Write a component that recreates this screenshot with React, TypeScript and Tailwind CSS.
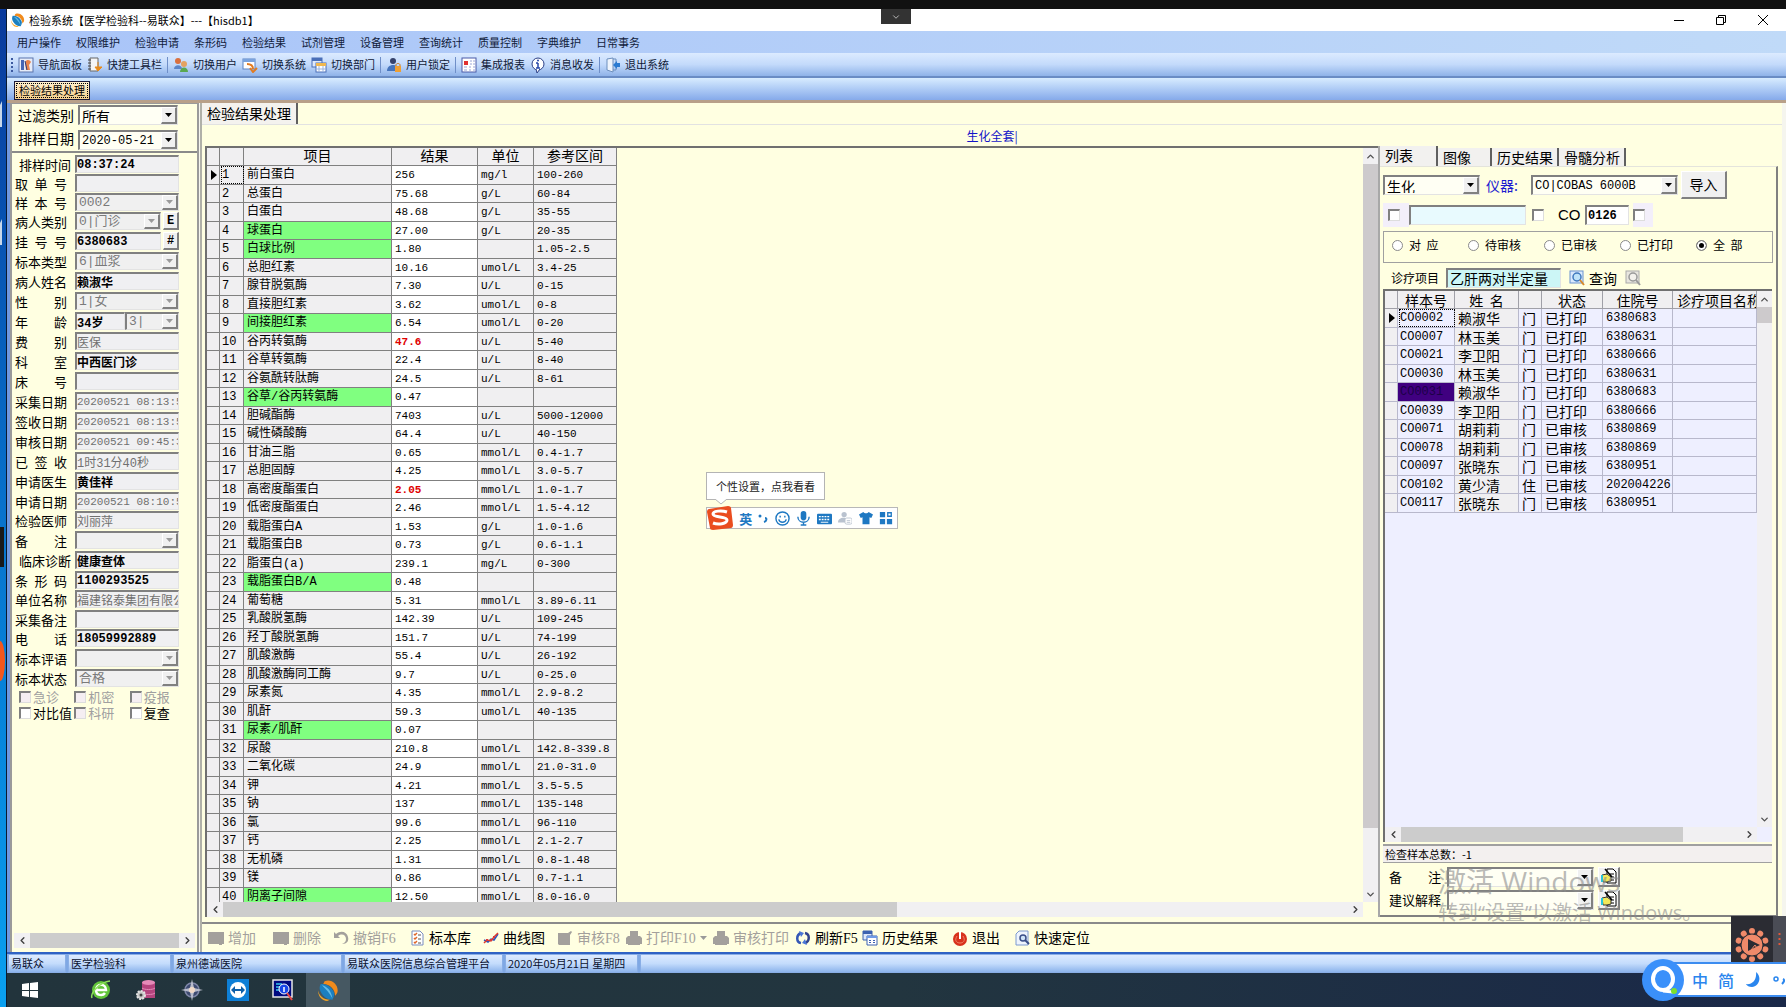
import React from 'react';
import { ChevronDown, ChevronLeft, ChevronRight, ChevronUp } from 'lucide-react';
import clsx from 'clsx';

type Kind = 'text' | 'combo';

interface FieldRow {
  label: string;
  value: string;
  kind?: Kind;
  bold?: boolean;
  tight?: boolean;
  small?: boolean;
  indent?: boolean;
  extra?: string;
}

const MENUS = ['用户操作', '权限维护', '检验申请', '条形码', '检验结果', '试剂管理', '设备管理', '查询统计', '质量控制', '字典维护', '日常事务'];

const FIELDS: FieldRow[] = [
  { label: '排样时间', value: '08:37:24', bold: true, tight: true, indent: true },
  { label: '取 单 号', value: '', tight: true },
  { label: '样 本 号', value: '0002', kind: 'combo', tight: true },
  { label: '病人类别', value: '0|门诊', kind: 'combo', extra: 'E' },
  { label: '挂 号 号', value: '6380683', bold: true, extra: '#' },
  { label: '标本类型', value: '6|血浆', kind: 'combo' },
  { label: '病人姓名', value: '赖淑华', bold: true },
  { label: '性 别', value: '1|女', kind: 'combo' },
  { label: '年 龄', value: '34岁', bold: true, extra: 'age' },
  { label: '费 别', value: '医保' },
  { label: '科 室', value: '中西医门诊', bold: true },
  { label: '床 号', value: '' },
  { label: '采集日期', value: '20200521 08:13:54', small: true },
  { label: '签收日期', value: '20200521 08:13:54', small: true },
  { label: '审核日期', value: '20200521 09:45:34', small: true },
  { label: '已 签 收', value: '1时31分40秒' },
  { label: '申请医生', value: '黄佳祥', bold: true },
  { label: '申请日期', value: '20200521 08:10:54', small: true, tight: true },
  { label: '检验医师', value: '刘丽萍' },
  { label: '备 注', value: '', kind: 'combo' },
  { label: '临床诊断', value: '健康查体', bold: true, indent: true },
  { label: '条 形 码', value: '1100293525', bold: true, tight: true },
  { label: '单位名称', value: '福建铭泰集团有限公司' },
  { label: '采集备注', value: '', tight: true },
  { label: '电 话', value: '18059992889', bold: true },
  { label: '标本评语', value: '', kind: 'combo' },
  { label: '标本状态', value: '合格', kind: 'combo' },
];

// name, result, unit, range
const RESULTS: [string, string, string, string][] = [
  ['前白蛋白', '256', 'mg/l', '100-260'],
  ['总蛋白', '75.68', 'g/L', '60-84'],
  ['白蛋白', '48.68', 'g/L', '35-55'],
  ['球蛋白', '27.00', 'g/L', '20-35'],
  ['白球比例', '1.80', '', '1.05-2.5'],
  ['总胆红素', '10.16', 'umol/L', '3.4-25'],
  ['腺苷脱氨酶', '7.30', 'U/L', '0-15'],
  ['直接胆红素', '3.62', 'umol/L', '0-8'],
  ['间接胆红素', '6.54', 'umol/L', '0-20'],
  ['谷丙转氨酶', '47.6', 'u/L', '5-40'],
  ['谷草转氨酶', '22.4', 'u/L', '8-40'],
  ['谷氨酰转肽酶', '24.5', 'u/L', '8-61'],
  ['谷草/谷丙转氨酶', '0.47', '', ''],
  ['胆碱酯酶', '7403', 'u/L', '5000-12000'],
  ['碱性磷酸酶', '64.4', 'u/L', '40-150'],
  ['甘油三脂', '0.65', 'mmol/L', '0.4-1.7'],
  ['总胆固醇', '4.25', 'mmol/L', '3.0-5.7'],
  ['高密度酯蛋白', '2.05', 'mmol/L', '1.0-1.7'],
  ['低密度酯蛋白', '2.46', 'mmol/L', '1.5-4.12'],
  ['载脂蛋白A', '1.53', 'g/L', '1.0-1.6'],
  ['载脂蛋白B', '0.73', 'g/L', '0.6-1.1'],
  ['脂蛋白(a)', '239.1', 'mg/L', '0-300'],
  ['载脂蛋白B/A', '0.48', '', ''],
  ['葡萄糖', '5.31', 'mmol/L', '3.89-6.11'],
  ['乳酸脱氢酶', '142.39', 'U/L', '109-245'],
  ['羟丁酸脱氢酶', '151.7', 'U/L', '74-199'],
  ['肌酸激酶', '55.4', 'U/L', '26-192'],
  ['肌酸激酶同工酶', '9.7', 'U/L', '0-25.0'],
  ['尿素氮', '4.35', 'mmol/L', '2.9-8.2'],
  ['肌酐', '59.3', 'umol/L', '40-135'],
  ['尿素/肌酐', '0.07', '', ''],
  ['尿酸', '210.8', 'umol/L', '142.8-339.8'],
  ['二氧化碳', '24.9', 'mmol/L', '21.0-31.0'],
  ['钾', '4.21', 'mmol/L', '3.5-5.5'],
  ['钠', '137', 'mmol/L', '135-148'],
  ['氯', '99.6', 'mmol/L', '96-110'],
  ['钙', '2.25', 'mmol/L', '2.1-2.7'],
  ['无机磷', '1.31', 'mmol/L', '0.8-1.48'],
  ['镁', '0.86', 'mmol/L', '0.7-1.1'],
  ['阴离子间隙', '12.50', 'mmol/L', '8.0-16.0'],
];

// calculated items are shown green, abnormal values red
const CALCULATED = [4, 5, 9, 13, 23, 31, 40];
const ABNORMAL = [10, 18];

const SAMPLES: [string, string, string, string, string][] = [
  ['CO0002', '赖淑华', '门', '已打印', '6380683'],
  ['CO0007', '林玉美', '门', '已打印', '6380631'],
  ['CO0021', '李卫阳', '门', '已打印', '6380666'],
  ['CO0030', '林玉美', '门', '已打印', '6380631'],
  ['CO0031', '赖淑华', '门', '已打印', '6380683'],
  ['CO0039', '李卫阳', '门', '已打印', '6380666'],
  ['CO0071', '胡莉莉', '门', '已审核', '6380869'],
  ['CO0078', '胡莉莉', '门', '已审核', '6380869'],
  ['CO0097', '张晓东', '门', '已审核', '6380951'],
  ['CO0102', '黄少清', '住', '已审核', '202004226'],
  ['CO0117', '张晓东', '门', '已审核', '6380951'],
];

const sunken = 'border-t-2 border-l-2 border-t-[#808080] border-l-[#808080] border-r border-b border-r-[#e3e3e3] border-b-[#e3e3e3]';
const raised = 'border-t border-l border-t-white border-l-white border-r-2 border-b-2 border-r-[#808080] border-b-[#808080] bg-[#f0f0f0]';
const mono = "font-['Liberation_Mono','Noto_Sans_CJK_SC',monospace]";

/* ---------- icons ---------- */

const Svg = ({ children, size = 16, box = 16 }: { children: React.ReactNode; size?: number; box?: number }) => (
  <svg width={size} height={size} viewBox={`0 0 ${box} ${box}`} fill="none" className="shrink-0" aria-hidden="true">
    {children}
  </svg>
);

const AppLogo = ({ size = 16 }: { size?: number }) => (
  <Svg size={size}>
    <path d="M5 1C10-1 15 3 15 8c0 2-1 3-2 4C13 7 9 3 4 3z" fill="#f08a1c" />
    <path d="M2 3c5 0 8 2 10 6 1 2 0 4-1 6-4 0-7-2-9-6-1-2-1-4 0-6z" fill="#1b7fc0" />
    <path d="M3 4c4 1 7 4 8 10-2-4-5-7-8-10z" fill="#63bbe6" />
    <path d="M0 8c1 4 4 7 9 7l-2 1C3 16 0 12 0 8z" fill="#f6a623" />
  </Svg>
);

const NavIcon = () => (
  <Svg>
    <rect x="1" y="1" width="14" height="14" fill="#e6ecf8" stroke="#5b74ad" />
    <path d="M3 3h3v10H3z" fill="#4566b5" />
    <path d="M7 5c2-3 5-2 6 0l-2 3 1 5H8z" fill="#e8834b" />
    <path d="M7 4l2 9" stroke="#2c3f80" />
  </Svg>
);
const ToolsIcon = () => (
  <Svg>
    <path d="M3 1h8v13H3z" fill="#f5f5f5" stroke="#666" />
    <path d="M1 3h3M1 6h3M1 9h3M1 12h3" stroke="#444" />
    <path d="M11 5v7M8 10l3 4 4-4z" fill="#e88b1a" stroke="#e88b1a" />
  </Svg>
);
const SwitchUserIcon = () => (
  <Svg>
    <circle cx="5" cy="4" r="3" fill="#d9703f" />
    <path d="M1 12c0-5 8-5 8 0z" fill="#5c86c9" />
    <circle cx="11" cy="7" r="3" fill="#e3a262" />
    <path d="M7 15c0-6 8-6 8 0z" fill="#5aa850" />
  </Svg>
);
const SwitchSysIcon = () => (
  <Svg>
    <rect x="1" y="2" width="12" height="10" fill="#fff" stroke="#5a83c4" />
    <path d="M1 2h12v3H1z" fill="#7ba3dd" />
    <path d="M5 7c4 0 6 2 6 5M8 11l3 4 4-4" stroke="#e07b22" strokeWidth="2" />
  </Svg>
);
const SwitchDeptIcon = () => (
  <Svg>
    <rect x="1" y="1" width="10" height="9" fill="#dfe9fa" stroke="#4a6fb8" />
    <path d="M1 1h10v3H1z" fill="#4a6fb8" />
    <rect x="5" y="6" width="10" height="9" fill="#fff" stroke="#4a6fb8" />
    <path d="M5 6h10v3H5z" fill="#f0b850" />
    <path d="M8 9v6M12 9v6M5 12h10" stroke="#9ab3dd" />
  </Svg>
);
const LockUserIcon = () => (
  <Svg>
    <circle cx="7" cy="4" r="3" fill="#35426b" />
    <path d="M1 14c0-8 12-8 12 0z" fill="#4675bd" />
    <rect x="9" y="9" width="6" height="6" fill="#f0a032" />
    <path d="M10 9V8c0-2 4-2 4 0v1" stroke="#c2761a" />
  </Svg>
);
const ReportIcon = () => (
  <Svg>
    <rect x="1" y="1" width="14" height="14" fill="#fff" stroke="#4a5ba8" />
    <path d="M3 4h4v4H3z" fill="#e03131" />
    <path d="M9 4h2M12 4h2M9 7h2M12 7h2M3 10h3M8 10h2M12 10h2M3 13h3M8 13h2M12 13h2" stroke="#9aa6d8" />
  </Svg>
);
const InfoIcon = () => (
  <Svg>
    <circle cx="8" cy="7" r="6" fill="#fff" stroke="#2b3f86" />
    <path d="M6 12l1 4 3-4" fill="#fff" stroke="#2b3f86" />
    <path d="M8 6v5M6 11h4M6 6h2" stroke="#2747a8" strokeWidth="1.5" />
    <circle cx="8" cy="3.5" r="1" fill="#2747a8" />
  </Svg>
);
const LeaveIcon = () => (
  <Svg>
    <path d="M2 2l6-1v14l-6-2z" fill="#eef4fc" stroke="#6d8fbd" />
    <path d="M8 2h3v11H8" stroke="#6d8fbd" />
    <path d="M8 8l4-4v2h3v4h-3v2z" fill="#2b7bd1" />
  </Svg>
);

const GrayBlock = ({ shape = 'box' }: { shape?: 'box' | 'check' | 'print' }) => (
  <Svg>
    {shape === 'box' && <path d="M0 2h16v12h-2v1h-3v-1H0z" fill="#a3a09c" />}
    {shape === 'check' && <path d="M1 3h10l3-2 1 1-2 3v10H2l-1-1z" fill="#a3a09c" />}
    {shape === 'print' && <path d="M4 1h8v5h2l2 2v6h-2v1H2v-1H0V8l2-2h2z" fill="#a3a09c" />}
  </Svg>
);
const UndoIcon = () => (
  <Svg>
    <path d="M1 2v6h6L5 6c4-3 8-1 8 3 0 2-1 4-4 5 5 0 7-3 6-7C14 2 8 0 3 4z" fill="#a3a09c" />
  </Svg>
);
const ListIcon = () => (
  <Svg>
    <path d="M3 1h8l3 3v11H3z" fill="#fff" stroke="#7a8dc0" />
    <path d="M5 4l1 1 2-2M5 8l1 1 2-2M5 12l1 1 2-2" stroke="#e0662a" strokeWidth="1.5" />
    <path d="M9 5h3M9 9h3M9 13h3" stroke="#555" />
  </Svg>
);
const CurveIcon = () => (
  <Svg>
    <path d="M1 10l4 2 3-3 3 1 4-6" stroke="#2855c0" strokeWidth="1.5" />
    <path d="M1 13l3-3 4 1 3-4 4-4" stroke="#e03a2a" strokeWidth="1.5" />
    <path d="M3 9h2v2H3zM7 9h2v2H7zM10 6h2v2h-2z" fill="#d93a3a" />
  </Svg>
);
const RefreshIcon = () => (
  <Svg>
    <path d="M6 13C1 12 1 5 6 3" stroke="#3557b5" strokeWidth="2.5" />
    <path d="M10 3c5 1 5 8 0 10" stroke="#31438c" strokeWidth="2.5" />
    <path d="M4 1l5 2-3 4zM12 15l-5-2 3-4z" fill="#4a76d6" />
  </Svg>
);
const HistoryIcon = () => (
  <Svg>
    <path d="M1 1h9v9H1z" fill="#dce8fb" stroke="#3c62b0" />
    <path d="M1 1h9v3H1z" fill="#3c62b0" />
    <path d="M5 6h10v9H5z" fill="#fff" stroke="#3c62b0" />
    <path d="M5 6h10v2H5z" fill="#6f9be6" />
    <path d="M7 10h2v1H7zM11 10h2v1h-2zM7 12h2v1H7zM11 12h2v1h-2z" fill="#3c62b0" />
  </Svg>
);
const PowerIcon = () => (
  <Svg>
    <circle cx="8" cy="9" r="7" fill="#d8321c" />
    <path d="M5 6c-3 5 0 7 3 7s6-2 3-7" stroke="#f08468" />
    <path d="M8 1v8" stroke="#fff" strokeWidth="2" />
  </Svg>
);
const SearchIcon = ({ gray }: { gray?: boolean }) => (
  <Svg>
    <rect x="1" y="1" width="13" height="12" fill={gray ? '#e8e6df' : '#dbeafc'} stroke={gray ? '#aaa' : '#6a92cf'} />
    <circle cx="8" cy="7" r="4" fill={gray ? '#f3f1ec' : '#bfe3f9'} stroke={gray ? '#999' : '#3f78bd'} strokeWidth="1.5" />
    <path d="M11 10l4 5" stroke={gray ? '#999' : '#d88a2a'} strokeWidth="2" />
  </Svg>
);
const LocateIcon = () => (
  <Svg>
    <path d="M5 1h9v14H2V4z" fill="#eef4fd" stroke="#7d9ad0" />
    <circle cx="9" cy="8" r="3" fill="#cfe4f8" stroke="#3a4f88" strokeWidth="1.5" />
    <path d="M11 10l4 4" stroke="#3a4f88" strokeWidth="2" />
  </Svg>
);
const NoteIcon = () => (
  <Svg>
    <path d="M6 1h6l3 3v11H6z" fill="#fff" stroke="#000" />
    <path d="M9 6h4M9 9h4M9 12h4" stroke="#000" />
    <path d="M1 7l5-1 4 3v4l-4 1H2z" fill="#f2e85a" stroke="#333" />
    <path d="M4 1l7 8" stroke="#000" strokeWidth="1.5" />
    <path d="M0 7h2v7H0z" fill="#27c4d8" />
  </Svg>
);

/* ---------- basic controls ---------- */

const Triangle = ({ muted }: { muted?: boolean }) => (
  <svg width="7" height="4" viewBox="0 0 7 4" aria-hidden="true">
    <path d="M0 0h7L3.5 4z" fill={muted ? '#9a9a9a' : '#000'} />
  </svg>
);

interface ComboProps {
  id: string;
  value: string;
  disabled?: boolean;
  className?: string;
  label?: string;
}

const Combo = ({ id, value, disabled, className, label }: ComboProps) => (
  <div className={clsx('flex min-w-0', sunken, disabled ? 'bg-[#f0f0f0]' : 'bg-[#fffff4]', className)}>
    <select
      id={id}
      aria-label={label}
      disabled={disabled}
      className={clsx('min-w-0 flex-1 appearance-none bg-transparent pl-0.5 leading-none opacity-100 outline-none', disabled && 'text-[#7a7a7a]')}>
      <option>{value}</option>
    </select>
    <span className={clsx('flex w-4 shrink-0 items-center justify-center', raised)}>
      <Triangle muted={disabled} />
    </span>
  </div>
);

const Check = ({ id, disabled, label }: { id: string; disabled?: boolean; label?: string }) => (
  <input
    id={id}
    type="checkbox"
    aria-label={label}
    disabled={disabled}
    className={clsx('size-3 shrink-0 appearance-none border-t-2 border-l-2 border-r border-b border-t-[#808080] border-l-[#808080] border-r-[#ddd] border-b-[#ddd]',
      disabled ? 'bg-[#f5eef2]' : 'bg-white')}
  />
);

const VScroll = ({ thumb }: { thumb: string }) => (
  <div className="flex w-[15px] shrink-0 flex-col bg-[#f1f0f2]">
    <span className="flex h-4 shrink-0 items-center justify-center"><ChevronUp size={11} strokeWidth={3} color="#505050" /></span>
    <div className="min-h-0 flex-1"><div className={clsx('w-full bg-[#cdcacc]', thumb)} /></div>
    <span className="flex h-4 shrink-0 items-center justify-center"><ChevronDown size={11} strokeWidth={3} color="#505050" /></span>
  </div>
);

const HScroll = ({ thumb }: { thumb: string }) => (
  <div className="flex h-[15px] shrink-0 bg-[#f1f0f2]">
    <span className="flex w-4 shrink-0 items-center justify-center"><ChevronLeft size={11} strokeWidth={3} color="#404040" /></span>
    <div className="min-w-0 flex-1"><div className={clsx('h-full bg-[#cccccc]', thumb)} /></div>
    <span className="flex w-4 shrink-0 items-center justify-center"><ChevronRight size={11} strokeWidth={3} color="#404040" /></span>
  </div>
);

const RowMarker = () => (
  <svg width="6" height="10" viewBox="0 0 6 10" className="ml-1" aria-hidden="true">
    <path d="M0 0l6 5-6 5z" fill="#000" />
  </svg>
);

/* ---------- window parts ---------- */

const TitleBar = () => (
  <header className="flex h-[22px] shrink-0 items-center bg-white pr-0.5 pl-1 text-[11px] text-black">
    <AppLogo size={14} />
    <h1 className="ml-1 flex-1 whitespace-nowrap">检验系统【医学检验科--易联众】---【hisdb1】</h1>
    <button aria-label="最小化" className="flex w-[42px] justify-center">
      <svg width="10" height="10"><path d="M0 5.5h10" stroke="#000" /></svg>
    </button>
    <button aria-label="还原" className="flex w-[42px] justify-center">
      <svg width="10" height="10" fill="none"><path d="M.5 2.5h7v7h-7zM2.5 2.5v-2h7v7h-2" stroke="#000" /></svg>
    </button>
    <button aria-label="关闭" className="flex w-[42px] justify-center">
      <svg width="10" height="10"><path d="M0 0l10 10M10 0L0 10" stroke="#000" /></svg>
    </button>
  </header>
);

const MenuBar = () => (
  <nav className="flex h-[22px] shrink-0 items-center gap-[15px] bg-linear-to-r from-[#a9c4f8] to-[#c0daf8] pl-2.5 text-[11px] text-[#111c3c]">
    {MENUS.map(m => <button key={m} className="whitespace-nowrap">{m}</button>)}
  </nav>
);

const TOOLS: ({ icon: React.ReactNode; text: string } | null)[] = [
  { icon: <NavIcon />, text: '导航面板' },
  { icon: <ToolsIcon />, text: '快捷工具栏' },
  null,
  { icon: <SwitchUserIcon />, text: '切换用户' },
  { icon: <SwitchSysIcon />, text: '切换系统' },
  { icon: <SwitchDeptIcon />, text: '切换部门' },
  null,
  { icon: <LockUserIcon />, text: '用户锁定' },
  null,
  { icon: <ReportIcon />, text: '集成报表' },
  { icon: <InfoIcon />, text: '消息收发' },
  null,
  { icon: <LeaveIcon />, text: '退出系统' },
];

const ToolBar = () => (
  <div className="flex h-[25px] shrink-0 items-center gap-[5px] border-b-2 border-[#6a8cc4] bg-linear-to-b from-[#dcebff] via-[#c3dafb] to-[#8fb2e8] pl-1 text-[11px] text-[#101a38]">
    <span className="h-3.5 border-l-2 border-dotted border-[#3c5aa0]" />
    {TOOLS.map((t, i) => t
      ? <button key={i} className="flex items-center gap-1 whitespace-nowrap">{t.icon}{t.text}</button>
      : <span key={i} className="h-4 border-l border-[#6f8fc8]" />)}
  </div>
);

const PageTabs = () => (
  <div className="flex h-[25px] shrink-0 items-end border-b-3 border-[#b8a089] bg-linear-to-b from-[#d8ecff] to-[#86aaea] pl-[7px]">
    <button className="h-[19px] border border-[#1a1a3a] bg-linear-to-b from-[#fff0cf] to-[#f5cf8c] p-px text-[11px] leading-none text-black">
      <span className="flex h-full items-center border border-dotted border-black px-0.5">检验结果处理</span>
    </button>
  </div>
);

const PatientField = ({ row, index }: { row: FieldRow; index: number }) => {
  const id = `field-${index}`;
  const combo = row.kind === 'combo';
  return (
    <div className={clsx('flex items-start', row.tight ? 'h-[19px]' : 'h-5')}>
      <label
        htmlFor={id}
        className={clsx('mt-px w-[52px] shrink-0 text-[13px] leading-[18px] whitespace-nowrap [text-align-last:justify]', row.indent ? 'ml-1 mr-1' : 'mr-2')}>
        {row.label}
      </label>
      <div className={clsx('flex h-[18px] w-[104px]', mono)}>
        {combo
          ? <Combo id={id} value={row.value} disabled className="h-full flex-1 text-[13px]" />
          : (
            <input
              id={id}
              defaultValue={row.value}
              readOnly
              className={clsx('h-full min-w-0 flex-1 bg-[#f0f0f2] leading-none outline-none', sunken,
                row.bold ? 'text-[12px] font-bold text-black' : 'text-[#707070]',
                !row.bold && (row.small ? 'text-[11px]' : 'text-[12px]'))}
            />
          )}
        {row.extra === 'age' && <Combo id="age-unit" label="年龄单位" value="3|" disabled className="h-full w-[54px] text-[13px]" />}
        {row.extra && row.extra !== 'age' && (
          <button type="button" className={clsx('ml-0.5 flex w-4 items-center justify-center text-[12px] font-bold leading-none', raised)}>
            {row.extra}
          </button>
        )}
      </div>
    </div>
  );
};

const CHECKS = [
  { text: '急诊', disabled: true }, { text: '机密', disabled: true }, { text: '疫报', disabled: true },
  { text: '对比值', disabled: false }, { text: '科研', disabled: true }, { text: '复查', disabled: false },
];

const PatientPanel = () => (
  <aside className="flex w-[189px] shrink-0 flex-col border-t border-l-2 border-r-2 border-[#9a9a9a] bg-[#ffffe1] text-black">
    <div className="flex h-[49px] flex-col justify-between border-b-2 border-[#8a8a8a] pt-px pb-px pl-1.5 text-[14px]">
      <div className="flex items-center gap-1">
        <label htmlFor="filter-kind" className="leading-5">过滤类别</label>
        <Combo id="filter-kind" value="所有" className="h-5 w-[100px]" />
      </div>
      <div className="flex items-start gap-1">
        <label htmlFor="filter-date" className="leading-4">排样日期</label>
        <Combo id="filter-date" value="2020-05-21" className={clsx('h-5 w-[100px] text-[12px]', mono)} />
      </div>
    </div>
    <form className="flex min-h-0 flex-1 flex-col overflow-hidden pt-0.5 pl-[3px]">
      {FIELDS.map((row, i) => <PatientField key={row.label + i} row={row} index={i} />)}
      <div className="grid w-[170px] grid-cols-3 pl-1 text-[13px] leading-4">
        {CHECKS.map((c, i) => (
          <span key={c.text} className={clsx('flex items-center gap-0.5 whitespace-nowrap', c.disabled && 'text-[#a0a0a0]')}>
            <Check id={`flag-${i}`} disabled={c.disabled} />
            <label htmlFor={`flag-${i}`}>{c.text}</label>
          </span>
        ))}
      </div>
    </form>
    <div className="px-0.5 pb-1"><HScroll thumb="w-full" /></div>
  </aside>
);

const ResultGrid = () => (
  <div className="flex min-w-0 flex-1 flex-col border-t-2 border-l-2 border-[#707070]">
    <div className="flex min-h-0 flex-1">
      <div className="min-w-0 flex-1 overflow-hidden">
        <table className={clsx('w-[410px] table-fixed border-separate border-spacing-0 text-[12px] text-black', mono)}>
          <colgroup>
            <col className="w-[13px]" /><col className="w-6" /><col className="w-[148px]" />
            <col className="w-[86px]" /><col className="w-14" /><col className="w-[83px]" />
          </colgroup>
          <thead>
            <tr className="h-[18px] bg-[#f0eff1] text-[14px] leading-4 [&>th]:border-r [&>th]:border-b [&>th]:border-[#808080] [&>th]:font-normal">
              <th /><th /><th>项目</th><th>结果</th><th>单位</th><th>参考区间</th>
            </tr>
          </thead>
          <tbody>
            {RESULTS.map(([name, value, unit, range], i) => {
              const no = i + 1;
              return (
                <tr
                  key={no}
                  className="bg-[#f0eff1] leading-4 whitespace-nowrap odd:h-[19px] even:h-[18px] [&>td]:border-r [&>td]:border-b [&>td]:border-[#808080]">
                  <td>{no === 1 && <RowMarker />}</td>
                  <td className="pl-0.5">
                    <span className={clsx('block', no === 1 && 'outline outline-dotted outline-black')}>{no}</span>
                  </td>
                  <td className={clsx('pl-[3px]', CALCULATED.includes(no) && 'bg-[#80ff80]')}>{name}</td>
                  <td className={clsx('bg-white pl-[3px] text-[11px]', ABNORMAL.includes(no) && 'font-bold text-[#e00000]')}>{value}</td>
                  <td className="pl-[3px] text-[11px]">{unit}</td>
                  <td className="pl-[3px] text-[11px]">{range}</td>
                </tr>
              );
            })}
          </tbody>
        </table>
      </div>
      <VScroll thumb="h-[92%]" />
    </div>
    <div className="pr-[15px]"><HScroll thumb="w-[60%]" /></div>
  </div>
);

const SideTabs = () => (
  <div className="flex h-5 shrink-0 items-end text-[14px] leading-[18px]">
    {[
      { t: '列表', w: 'w-[58px]' },
      { t: '图像', w: 'w-[54px]' },
      { t: '历史结果', w: 'w-[67px]' },
      { t: '骨髓分析', w: 'w-[67px]' },
    ].map(({ t, w }, i) => (
      <button key={t} className={clsx('flex border-r-2 border-[#606060] bg-[#f2f1ef] pl-[5px] whitespace-nowrap', w, i === 0 ? 'h-5' : 'h-[18px]')}>
        {t}
      </button>
    ))}
  </div>
);

const SampleTable = () => (
  <div className="flex min-h-0 flex-1 flex-col border-t-2 border-l-2 border-[#707070] bg-[#eeefff]">
    <div className="flex min-h-0 flex-1">
      <div className="min-w-0 flex-1 overflow-hidden">
        <table className="w-full table-fixed border-separate border-spacing-0 text-[14px] text-black">
          <colgroup>
            <col className="w-[13px]" /><col className="w-[57px]" /><col className="w-16" /><col className="w-[23px]" />
            <col className="w-[61px]" /><col className="w-[70px]" /><col />
          </colgroup>
          <thead>
            <tr className="h-[18px] bg-[#f0eff1] leading-4 [&>th]:overflow-hidden [&>th]:border-r [&>th]:border-b [&>th]:border-[#a0a0a8] [&>th]:font-normal [&>th]:whitespace-nowrap">
              <th /><th>样本号</th><th>姓&nbsp; 名</th><th /><th>状态</th><th>住院号</th><th className="pl-1 text-left">诊疗项目名称</th>
            </tr>
          </thead>
          <tbody>
            {SAMPLES.map(([no, name, src, status, visit], i) => (
              <tr
                key={no}
                className="leading-4 whitespace-nowrap odd:h-[19px] even:h-[18px] [&>td]:border-r [&>td]:border-b [&>td]:border-[#b8b8cc]">
                <td className="bg-[#f0eff1]">{i === 0 && <RowMarker />}</td>
                <td className={clsx('pl-0.5 text-[12px]', mono, i === 4 && 'bg-[#400080] text-[#1c0048]')}>
                  <span className={clsx('block', i === 0 && 'outline outline-dotted outline-black')}>{no}</span>
                </td>
                <td className="bg-[#f0eff1] pl-[3px]">{name}</td>
                <td className="pl-[3px]">{src}</td>
                <td className="pl-[3px]">{status}</td>
                <td className={clsx('pl-[3px] text-[12px]', mono)}>{visit}</td>
                <td />
              </tr>
            ))}
          </tbody>
        </table>
      </div>
      <VScroll thumb="h-4" />
    </div>
    <div className="pr-[15px]"><HScroll thumb="w-[83%]" /></div>
  </div>
);

const STATES = ['对  应', '待审核', '已审核', '已打印', '全  部'];

const SidePanel = () => (
  <section className="flex w-[404px] shrink-0 flex-col border-l-2 border-[#a8a8a8] text-black">
    <SideTabs />
    <div className="mr-1 flex min-h-0 flex-1 flex-col border-t border-r-2 border-b-2 border-t-[#e4e4dc] border-r-[#808080] border-b-[#808080] pr-1 pl-[3px]">
      <div className="flex items-center pt-1 text-[14px]">
        <Combo id="dept" label="科室类别" value="生化" className="h-5 w-[97px]" />
        <label htmlFor="device" className="ml-1.5 w-[45px] whitespace-nowrap text-[#1a1ad0]">仪器:</label>
        <Combo id="device" value="CO|COBAS 6000B" className={clsx('h-5 w-[147px] text-[12px]', mono)} />
        <button className={clsx('ml-[3px] h-7 w-[46px]', raised)}>导入</button>
      </div>
      <div className="flex h-8 items-center">
        <span className="flex h-6 w-[26px] items-center bg-[#f3effa] pl-[5px]"><Check id="use-barcode" label="条码" /></span>
        <input aria-label="条码号" className={clsx('h-5 w-[117px] bg-[#e8fafe]', sunken)} />
        <span className="flex w-8 pl-1.5"><Check id="use-no" label="编号" /></span>
        <label htmlFor="sample-no" className="w-[27px] font-['Liberation_Sans',sans-serif] text-[15px]">CO</label>
        <input id="sample-no" defaultValue="0126" className={clsx('h-5 w-[44px] bg-white pl-px text-[12px] font-bold', mono, sunken)} />
        <span className="ml-1 flex h-6 w-5 items-center bg-[#f3effa]"><Check id="lock-no" label="锁定" /></span>
      </div>
      <fieldset className="flex h-8 shrink-0 items-center border border-[#a0a0a0] pt-1 pl-2 text-[12px]">
        {STATES.map((s, i) => (
          <span key={s} className="flex w-[76px] items-center gap-1.5 whitespace-pre">
            <input
              id={`state-${i}`}
              type="radio"
              name="state"
              defaultChecked={i === 4}
              className="size-[11px] appearance-none rounded-full border border-[#8a8a8a] bg-white checked:bg-black checked:shadow-[inset_0_0_0_2px_white]"
            />
            <label htmlFor={`state-${i}`}>{s}</label>
          </span>
        ))}
      </fieldset>
      <div className="flex h-[26px] shrink-0 items-center pt-1 pl-2 text-[14px]">
        <label htmlFor="item" className="w-[55px] text-[12px]">诊疗项目</label>
        <input id="item" defaultValue="乙肝两对半定量" className={clsx('mr-2 h-5 w-[115px] bg-[#ccf6f6] pl-0.5 text-[14px]', sunken)} />
        <button className="flex items-center gap-1"><SearchIcon />查询</button>
        <button aria-label="重新查询" className="ml-2"><SearchIcon gray /></button>
      </div>
      <SampleTable />
      <output className="mt-0.5 flex h-[19px] shrink-0 items-center border-t-2 border-b border-[#a0a0a0] bg-[#f3f0ef] pl-0.5 text-[11px]">
        检查样本总数：-1
      </output>
      <div className="flex flex-col gap-1 pt-1 pb-1.5 pl-1.5 text-[14px]">
        {[{ id: 'remark', t: '备 注' }, { id: 'advice', t: '建议解释' }].map(({ id, t }) => (
          <div key={id} className="flex h-[19px] items-center">
            <label htmlFor={id} className="mr-1.5 w-[52px] text-[13px] whitespace-nowrap [text-align-last:justify]">{t}</label>
            <Combo id={id} value="" className="h-5 w-[147px]" />
            <button aria-label="编辑" className={clsx('ml-1 flex h-5 w-[22px] items-center justify-center', raised)}><NoteIcon /></button>
          </div>
        ))}
      </div>
    </div>
  </section>
);

const ACTIONS: { icon: React.ReactNode; text: string; w: string; disabled?: boolean; more?: boolean }[] = [
  { icon: <GrayBlock />, text: '增加', w: 'w-[65px]', disabled: true },
  { icon: <GrayBlock />, text: '删除', w: 'w-[60px]', disabled: true },
  { icon: <UndoIcon />, text: '撤销F6', w: 'w-[76px]', disabled: true },
  { icon: <ListIcon />, text: '标本库', w: 'w-[74px]' },
  { icon: <CurveIcon />, text: '曲线图', w: 'w-[74px]' },
  { icon: <GrayBlock shape="check" />, text: '审核F8', w: 'w-[69px]', disabled: true },
  { icon: <GrayBlock shape="print" />, text: '打印F10', w: 'w-[87px]', disabled: true, more: true },
  { icon: <GrayBlock shape="print" />, text: '审核打印', w: 'w-[82px]', disabled: true },
  { icon: <RefreshIcon />, text: '刷新F5', w: 'w-[67px]' },
  { icon: <HistoryIcon />, text: '历史结果', w: 'w-[90px]' },
  { icon: <PowerIcon />, text: '退出', w: 'w-[62px]' },
  { icon: <LocateIcon />, text: '快速定位', w: 'w-[80px]' },
];

const ActionBar = () => (
  <div className="flex h-[30px] shrink-0 items-center border-t-2 border-[#8a8a8a] pl-1.5 font-['Liberation_Serif','Noto_Sans_CJK_SC',serif] text-[14px]">
    {ACTIONS.map(a => (
      <button
        key={a.text}
        disabled={a.disabled}
        className={clsx('flex items-center gap-1 whitespace-nowrap', a.w, a.disabled ? 'text-[#a3a09c]' : 'text-black')}>
        {a.icon}{a.text}{a.more && <Triangle muted />}
      </button>
    ))}
  </div>
);

const Workspace = () => (
  <main className="mr-1 ml-px flex min-w-0 flex-1 flex-col border-l-2 border-[#b0b0a8] bg-[#ffffe1]">
    <div className="flex h-[22px] shrink-0 items-stretch border-b border-[#e2e2e2]">
      <button className="w-[96px] border-r-2 border-[#606060] bg-[#f4f2ee] pb-0.5 text-[14px] leading-none text-black">检验结果处理</button>
    </div>
    <div className="flex h-[21px] shrink-0 items-center justify-center text-[12px] text-[#1414c8]">生化全套|</div>
    <div className="flex min-h-0 flex-1 pb-[5px] pl-[3px]">
      <ResultGrid />
      <SidePanel />
    </div>
    <ActionBar />
  </main>
);

const StatusBar = () => (
  <footer className="flex h-[21px] shrink-0 gap-0.5 border-t-2 border-[#2f62c4] bg-[#7fa8e4] pl-px text-[11px] leading-none whitespace-nowrap text-[#0a1230]">
    {[
      { t: '易联众', w: 'w-[58px]' },
      { t: '医学检验科', w: 'w-[103px]' },
      { t: '泉州德诚医院', w: 'w-[169px]' },
      { t: '易联众医院信息综合管理平台', w: 'w-[159px]' },
      { t: '2020年05月21日 星期四', w: 'w-[133px]' },
      { t: '', w: 'flex-1' },
    ].map(({ t, w }) => (
      <span key={w} className={clsx('flex items-center border border-[#89aee6] bg-linear-to-b from-[#dceaff] via-[#c4dcfc] to-[#8db4ec] pl-0.5', w)}>{t}</span>
    ))}
  </footer>
);

const TaskBar = () => (
  <div className="flex h-[34px] shrink-0 items-center bg-linear-to-r from-[#22343c] via-[#22353f] to-[#1a2848] pl-px">
    <button aria-label="开始" className="mr-[26px] flex w-[44px] justify-center">
      <Svg><path d="M0 2l7-1v7H0zM8 1l8-1v8H8zM0 9h7v6l-7-1zM8 9h8v7l-8-1z" fill="#fff" /></Svg>
    </button>
    <button aria-label="浏览器" className="flex w-[45px] justify-center">
      <Svg size={22} box={22}>
        <circle cx="11" cy="11" r="9" fill="#62c43a" />
        <path d="M6 11h10c0-7-10-7-10 0 0 6 7 6 9 3" stroke="#fff" strokeWidth="2.5" />
        <path d="M2 19C0 14 10 3 20 2" stroke="#8ee05a" strokeWidth="1.5" />
      </Svg>
    </button>
    <button aria-label="数据库" className="flex w-[46px] justify-center">
      <Svg size={22} box={22}>
        <path d="M7 3h13v16H7z" fill="#b5447e" />
        <ellipse cx="13.5" cy="3.5" rx="6.5" ry="2.5" fill="#e58ab8" />
        <path d="M7 9c2 2 11 2 13 0M7 14c2 2 11 2 13 0" stroke="#e58ab8" />
        <circle cx="6" cy="16" r="4" fill="#c9c9c9" stroke="#e4e4e4" strokeWidth="2" strokeDasharray="2 1" />
        <circle cx="6" cy="16" r="1.5" fill="#444" />
      </Svg>
    </button>
    <button aria-label="导航" className="flex w-[46px] justify-center">
      <Svg size={22} box={22}>
        <circle cx="11" cy="11" r="7" fill="#3d4a70" stroke="#8088a8" strokeWidth="1.5" />
        <path d="M11 0l2 9 9 2-9 2-2 9-2-9-9-2 9-2z" fill="#b9bccb" />
        <circle cx="11" cy="11" r="3" fill="#f0d9c8" />
      </Svg>
    </button>
    <button aria-label="远程协助" className="flex w-[45px] justify-center">
      <Svg size={22} box={22}>
        <rect width="22" height="22" fill="#0e7fd6" />
        <circle cx="11" cy="11" r="8" fill="#fff" />
        <path d="M4 11l4-4v3h6V7l4 4-4 4v-3H8v3z" fill="#0e5fa8" />
      </Svg>
    </button>
    <button aria-label="屏幕查看" className="flex w-[46px] justify-center">
      <Svg size={22} box={22}>
        <rect x="1" y="1" width="19" height="17" fill="#000a80" stroke="#e8e8e8" strokeWidth="1.5" />
        <path d="M4 5h6M4 8h4M4 11h5" stroke="#35c8f0" strokeWidth="1.5" />
        <circle cx="12" cy="10" r="5" fill="#1646e8" stroke="#fff" />
        <path d="M15 14l5 7" stroke="#e84848" strokeWidth="2" />
        <path d="M12 8v5" stroke="#fff" strokeWidth="1.5" />
      </Svg>
    </button>
    <button aria-label="检验系统" className="flex h-full w-[44px] items-center justify-center bg-[#465862]"><AppLogo size={21} /></button>
  </div>
);

/* ---------- floating things ---------- */

const ImeBar = () => (
  <div className="absolute top-[472px] left-[706px] text-[#1e78c2]">
    <div className="relative flex h-7 w-[119px] items-center justify-center border border-[#b4b4b4] bg-white text-[11px] text-[#222]">
      个性设置，点我看看
      <svg width="12" height="6" className="absolute top-full left-2" aria-hidden="true"><path d="M0 0l6 5 6-5" fill="#fff" stroke="#b4b4b4" /></svg>
    </div>
    <div className="mt-[7px] flex h-[22px] w-[192px] items-center justify-between border border-[#b8b8b8] bg-white pr-1">
      <svg width="26" height="26" viewBox="0 0 26 26" aria-hidden="true">
        <path d="M2 4l19-3c2 0 3 1 3 2l2 17c0 2-1 3-2 3L6 25c-2 0-3-1-3-2L0 7c0-2 1-3 2-3z" fill="#ea4d1f" />
        <path d="M20 7c-6-2-14-1-14 2 0 4 14 2 14 6 0 4-9 5-14 3" fill="none" stroke="#fff" strokeWidth="3" />
      </svg>
      <span className="text-[13px] leading-none font-bold">英</span>
      <svg width="10" height="10" aria-hidden="true"><circle cx="2" cy="3" r="1.5" fill="#1e78c2" /><path d="M7 5c2 0 2 3-1 4" stroke="#1e78c2" strokeWidth="2" fill="none" /></svg>
      <Svg size={15}>
        <circle cx="8" cy="8" r="7" stroke="#1e78c2" strokeWidth="1.5" />
        <path d="M4 9c1 4 7 4 8 0M5.5 5v2M10.5 5v2" stroke="#1e78c2" strokeWidth="1.5" />
      </Svg>
      <Svg size={15}>
        <rect x="5" y="0" width="6" height="10" rx="3" fill="#1e78c2" />
        <path d="M2 6c0 8 12 8 12 0M8 12v3M5 15h6" stroke="#1e78c2" strokeWidth="1.5" />
      </Svg>
      <Svg size={15}>
        <rect x="0" y="3" width="16" height="11" rx="1" fill="#1e78c2" />
        <path d="M2 6h12M2 9h12" stroke="#fff" strokeWidth="1.5" strokeDasharray="2 1" />
        <path d="M4 12h8" stroke="#fff" />
      </Svg>
      <Svg size={14}>
        <circle cx="7" cy="4" r="3" fill="#b9c2cf" />
        <path d="M0 13c0-7 12-7 13 0z" fill="#b9c2cf" />
        <rect x="8" y="8" width="8" height="7" rx="2" fill="#fff" stroke="#b9c2cf" />
        <path d="M10 11h4M10 13h4" stroke="#b9c2cf" />
      </Svg>
      <Svg size={14}><path d="M5 1c1 2 5 2 6 0l5 3-2 4-2-1v8H4V7L2 8 0 4z" fill="#1e78c2" /></Svg>
      <Svg size={14}>
        <path d="M1 1h6v6H1zM1 9h6v6H1zM9 9h6v6H9z" fill="#1e78c2" />
        <path d="M10 2h4v4h-4z" stroke="#1e78c2" strokeWidth="1.5" />
      </Svg>
    </div>
  </div>
);

const Watermark = () => (
  <div className="pointer-events-none absolute right-[60px] bottom-[80px] w-[288px] font-['Open_Sans','Noto_Sans_CJK_SC',sans-serif] whitespace-nowrap text-[#8c8c8c]/60">
    <p className="text-[28px] leading-9">激活 Windows</p>
    <p className="text-[20px] leading-7">转到“设置”以激活 Windows。</p>
  </div>
);

const CornerWidgets = () => (
  <div className="absolute right-0 bottom-2.5 flex flex-col items-end">
    <div className="flex h-[46px] w-[55px] bg-[#2b2c33]">
      <svg width="42" height="46" viewBox="0 0 42 46" aria-hidden="true">
        {[0, 36, 72, 108, 144, 180, 216, 252, 288, 324].map(a => (
          <circle key={a} cx="21" cy="15" r="3" fill="#f08a6a" transform={`rotate(${a} 21 29)`} />
        ))}
        <circle cx="21" cy="29" r="11" fill="#f08a6a" />
        <circle cx="21" cy="29" r="11" fill="none" stroke="#2b2c33" />
        <path d="M17 23l12 6-12 6z" fill="#2b2c33" />
        <path d="M20 34l4-5 3 5" stroke="#f08a6a" fill="none" />
      </svg>
      <span className="flex flex-1 items-center justify-center bg-[#4a4c55]">
        <svg width="3" height="12" aria-hidden="true"><path d="M1.5 0v12" stroke="#e0573a" strokeWidth="2" strokeDasharray="2 3" /></svg>
      </span>
    </div>
    <div className="flex h-[35px] w-[123px] items-center border-y-2 border-[#3c8cf0] bg-white text-[16px] leading-none font-medium text-[#2a86ee]">
      <svg width="42" height="42" viewBox="0 0 42 42" className="-ml-[21px] shrink-0" aria-hidden="true">
        <circle cx="21" cy="21" r="21" fill="#3a90fa" />
        <ellipse cx="21" cy="20" rx="10" ry="11" fill="none" stroke="#fff" strokeWidth="4" />
        <path d="M21 32l10 1" stroke="#fff" strokeWidth="3" />
        <circle cx="32" cy="32" r="3" fill="#7ee02a" />
      </svg>
      <span className="ml-2">中</span>
      <span className="ml-2.5">简</span>
      <svg width="15" height="15" viewBox="0 0 15 15" className="ml-3 shrink-0" aria-hidden="true"><path d="M10 0c7 6 2 15-4 15-3 0-5-1-6-3 6 1 11-4 10-12z" fill="#2a86ee" /></svg>
      <svg width="12" height="10" viewBox="0 0 12 10" className="ml-3 shrink-0" aria-hidden="true"><circle cx="3" cy="4" r="2" fill="none" stroke="#2a86ee" strokeWidth="1.5" /><path d="M10 4c2 1 1 3-1 5" stroke="#2a86ee" strokeWidth="2" fill="none" /></svg>
    </div>
  </div>
);

export default function App() {
  return (
    <div className="relative flex h-screen flex-col overflow-hidden bg-[#111] font-['Noto_Sans_CJK_SC',sans-serif]">
      <div className="h-[9px] shrink-0 bg-[#111]" />
      <div className="flex min-h-0 flex-1">
        <div className="w-[7px] shrink-0 border-r border-[#0a1a30] bg-linear-to-b from-[#0a3a9c] via-[#0872cc] to-[#0aa0f0]">
          <svg width="5" height="900" aria-hidden="true">
            <path d="M0 518h4v40H0z" fill="#1a1a1a" />
            <ellipse cx="0" cy="652" rx="5" ry="20" fill="#f4571c" />
            <path d="M0 96l2-4v26H0zM0 214l2-4v26H0z" fill="#c8d8ea" />
          </svg>
        </div>
        <div className="flex min-w-0 flex-1 flex-col">
          <TitleBar />
          <MenuBar />
          <ToolBar />
          <PageTabs />
          <div className="flex min-h-0 flex-1 border-l-3 border-[#6f98e0] bg-[#f5f5ee]">
            <PatientPanel />
            <Workspace />
          </div>
          <StatusBar />
          <TaskBar />
        </div>
      </div>
      <button aria-label="展开" className="absolute top-[9px] left-[881px] flex h-[15px] w-[30px] items-center justify-center bg-[#333]">
        <ChevronDown size={10} color="#ccc" />
      </button>
      <ImeBar />
      <Watermark />
      <CornerWidgets />
    </div>
  );
}
